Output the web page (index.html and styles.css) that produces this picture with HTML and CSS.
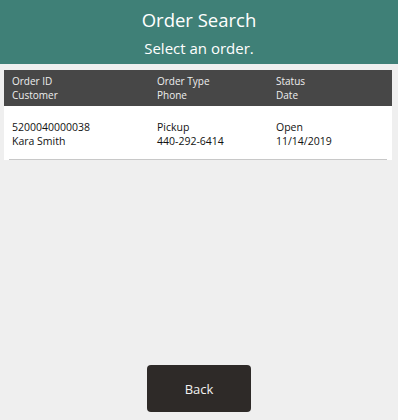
FILE: index.html
```html
<!DOCTYPE html>
<html>
<head>
<meta charset="utf-8">
<link rel="stylesheet" href="styles.css">
</head>
<body>
<div class="screen">
  <header class="header">
    <div class="title">Order Search</div>
    <div class="subtitle">Select an order.</div>
  </header>
  <section class="table">
    <div class="thead">
      <div class="cell c1"><div>Order ID</div><div>Customer</div></div>
      <div class="cell c2"><div>Order Type</div><div>Phone</div></div>
      <div class="cell c3"><div>Status</div><div>Date</div></div>
    </div>
    <div class="row">
      <div class="cell c1"><div>5200040000038</div><div>Kara Smith</div></div>
      <div class="cell c2"><div>Pickup</div><div>440-292-6414</div></div>
      <div class="cell c3"><div>Open</div><div>11/14/2019</div></div>
    </div>
  </section>
  <div class="spacer"></div>
  <footer class="footer">
    <button class="back">Back</button>
  </footer>
</div>
</body>
</html>
```

FILE: styles.css
```css
html, body {
  margin: 0;
  padding: 0;
}
body {
  width: 398px;
  height: 420px;
  overflow: hidden;
  background: #efefef;
  font-family: "Open Sans", "Noto Sans", sans-serif;
}
.screen {
  display: flex;
  flex-direction: column;
  height: 420px;
}
.header {
  background: #3f8077;
  color: #ffffff;
  height: 64px;
  display: flex;
  flex-direction: column;
  align-items: center;
  box-sizing: border-box;
  padding-top: 7px;
}
.title {
  font-size: 18.5px;
  line-height: 26px;
}
.subtitle {
  font-size: 15px;
  line-height: 22px;
  margin-top: 4px;
}
.table {
  margin: 6px 6px 0 4px;
  background: #ffffff;
}
.thead {
  background: #474747;
  color: #eeeeee;
  display: flex;
  height: 36px;
  box-sizing: border-box;
  padding-top: 4px;
}
.cell {
  font-size: 10.5px;
  line-height: 14px;
}
.thead .cell {
  font-size: 10px;
}
.c1 { padding-left: 8px; width: 145px; }
.c2 { width: 119px; }
.c3 { flex: 1; }
.row {
  display: flex;
  color: #111111;
  height: 54px;
  box-sizing: border-box;
  padding-top: 14px;
  border-bottom: 1px solid #c8c8c8;
  margin: 0 5px 0 5px;
}
.row .c1 { padding-left: 3px; width: 145px; }
.spacer { flex: 1; }
.footer {
  display: flex;
  justify-content: center;
  padding-bottom: 8px;
}
.back {
  width: 104px;
  height: 47px;
  background: #2e2a28;
  color: #f2f2f2;
  border: none;
  border-radius: 4px;
  font-family: "Open Sans", "Noto Sans", sans-serif;
  font-size: 13px;
}
```
